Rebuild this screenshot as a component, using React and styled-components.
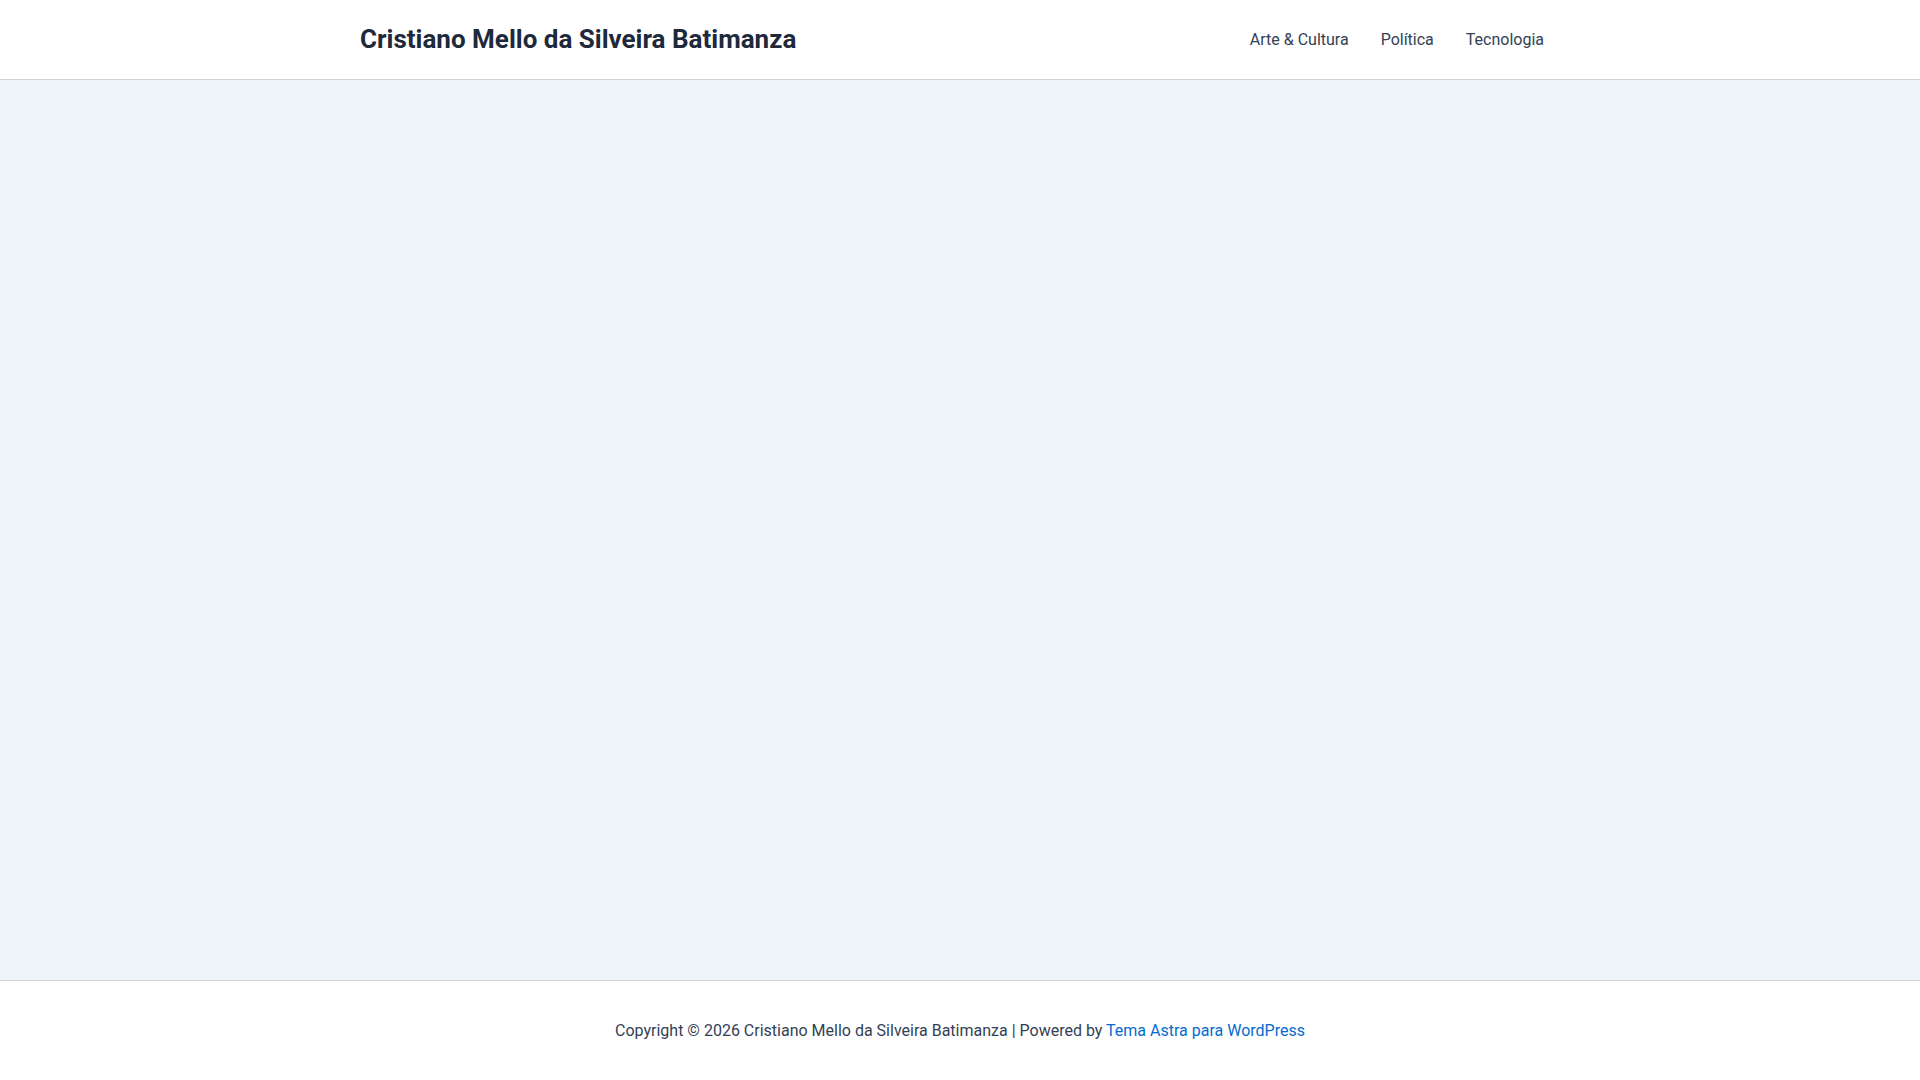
import React from "react";
import styled, { createGlobalStyle } from "styled-components";

const Global = createGlobalStyle`
  html, body { margin: 0; padding: 0; }
  body {
    font-family: Roboto, "Liberation Sans", sans-serif;
    background: #f0f5fa;
    color: #334155;
  }
  #root { min-height: 100vh; }
`;

const Page = styled.div`
  min-height: 100vh;
  display: flex;
  flex-direction: column;
`;

const Header = styled.header`
  background: #ffffff;
  border-bottom: 1px solid #d1d5db;
  height: 80px;
  box-sizing: border-box;
`;

const Container = styled.div`
  max-width: 1200px;
  margin: 0 auto;
  height: 100%;
  display: flex;
  align-items: center;
  justify-content: ${(p) => p.$justify || "space-between"};
`;

const SiteTitle = styled.a`
  font-size: 26px;
  font-weight: 700;
  color: #1e293b;
  text-decoration: none;
  line-height: 1.2;
`;

const Nav = styled.nav`
  display: flex;
  align-items: center;
`;

const NavItem = styled.a`
  font-size: 16px;
  color: #334155;
  text-decoration: none;
  padding: 0 16px;
  line-height: 80px;
`;

const Main = styled.main`
  flex: 1;
  background: #f0f5fa;
`;

const Footer = styled.footer`
  background: #ffffff;
  border-top: 1px solid #d1d5db;
  height: 100px;
  box-sizing: border-box;
`;

const FooterText = styled.p`
  margin: 0;
  font-size: 16px;
  color: #334155;
  text-align: center;
`;

const FooterLink = styled.a`
  color: #046bd2;
  text-decoration: none;
`;

export default function App() {
  return (
    <>
      <Global />
      <Page>
        <Header>
          <Container>
            <SiteTitle href="#">Cristiano Mello da Silveira Batimanza</SiteTitle>
            <Nav>
              <NavItem href="#">Arte &amp; Cultura</NavItem>
              <NavItem href="#">Política</NavItem>
              <NavItem href="#">Tecnologia</NavItem>
            </Nav>
          </Container>
        </Header>
        <Main />
        <Footer>
          <Container $justify="center">
            <FooterText>
              Copyright © 2026 Cristiano Mello da Silveira Batimanza | Powered by{" "}
              <FooterLink href="#">Tema Astra para WordPress</FooterLink>
            </FooterText>
          </Container>
        </Footer>
      </Page>
    </>
  );
}
